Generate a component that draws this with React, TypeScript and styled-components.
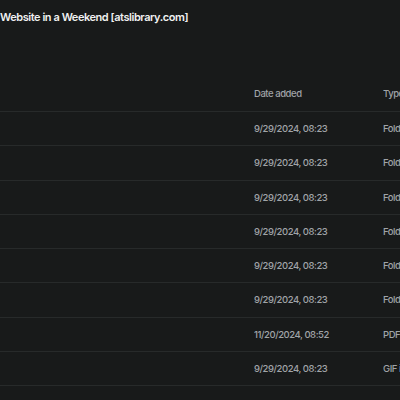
import React from "react";
import styled, { createGlobalStyle } from "styled-components";

const GlobalStyle = createGlobalStyle`
  html, body {
    margin: 0;
    padding: 0;
    background: #181a1a;
    overflow: hidden;
  }
  body {
    font-family: Inter, "Noto Sans", sans-serif;
  }
`;

const Page = styled.div`
  width: 400px;
  height: 400px;
  background: #181a1a;
  overflow: hidden;
`;

const Title = styled.h1`
  margin: 0;
  padding: 9px 0 0 0;
  height: 17px;
  font-size: 11px;
  font-weight: 600;
  letter-spacing: -0.45px;
  line-height: 17px;
  color: #f0f1f1;
  white-space: nowrap;
`;

const Table = styled.div`
  margin-top: 49px;
  width: 520px;
`;

const Row = styled.div<{ $header?: boolean }>`
  display: grid;
  grid-template-columns: 254px 129px 1fr;
  align-items: center;
  box-sizing: border-box;
  height: ${(p) => (p.$header ? "37px" : "34.25px")};
  border-bottom: 1px solid #272a2a;
`;

const Cell = styled.div`
  font-size: 9.5px;
  font-weight: 500;
  letter-spacing: -0.45px;
  color: #a0a4a8;
  white-space: nowrap;
  overflow: hidden;
`;

const rows = [
  { date: "9/29/2024, 08:23", type: "Folder" },
  { date: "9/29/2024, 08:23", type: "Folder" },
  { date: "9/29/2024, 08:23", type: "Folder" },
  { date: "9/29/2024, 08:23", type: "Folder" },
  { date: "9/29/2024, 08:23", type: "Folder" },
  { date: "9/29/2024, 08:23", type: "Folder" },
  { date: "11/20/2024, 08:52", type: "PDF document" },
  { date: "9/29/2024, 08:23", type: "GIF image" },
];

export default function App() {
  return (
    <Page>
      <GlobalStyle />
      <Title>Website in a Weekend [atslibrary.com]</Title>
      <Table>
        <Row $header>
          <Cell />
          <Cell>Date added</Cell>
          <Cell>Type</Cell>
        </Row>
        {rows.map((r, i) => (
          <Row key={i}>
            <Cell />
            <Cell>{r.date}</Cell>
            <Cell>{r.type}</Cell>
          </Row>
        ))}
      </Table>
    </Page>
  );
}
